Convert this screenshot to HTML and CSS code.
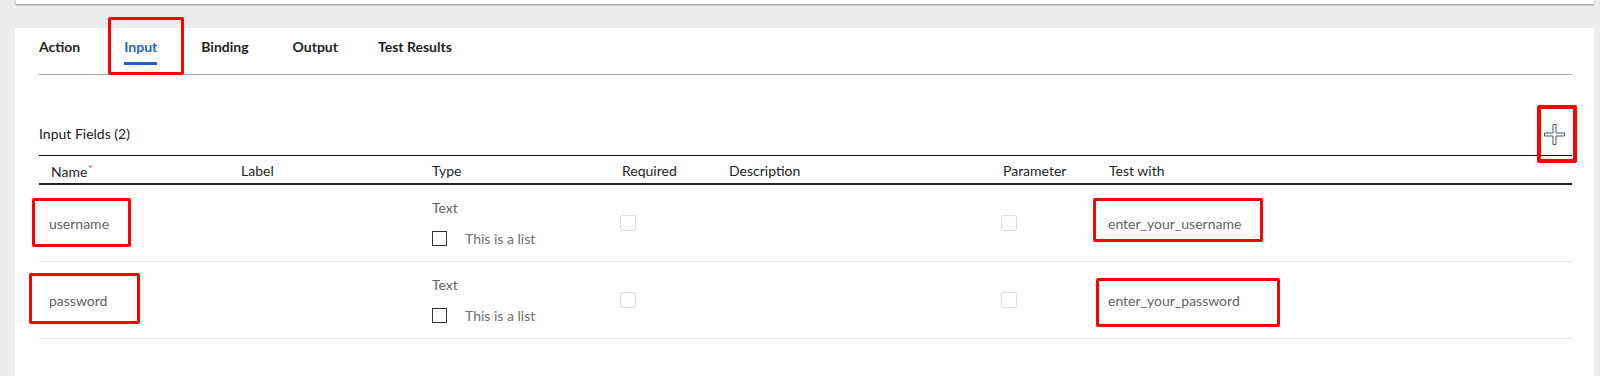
FILE: index.html
```html
<!DOCTYPE html>
<html lang="en">

<head>
  <meta charset="UTF-8" />
  <meta name="viewport" content="width=device-width, initial-scale=1" />
  <title>Input Fields</title>
  <link rel="stylesheet" href="styles.css">
</head>

<body>
  <div class="topbar"></div>

  <div class="panel">
    <nav class="tabs">
      <a class="tab">Action</a>
      <a class="tab active">Input</a>
      <a class="tab">Binding</a>
      <a class="tab">Output</a>
      <a class="tab">Test Results</a>
    </nav>

    <section class="fields">
      <div class="fields-head">
        <h2>Input Fields (2)</h2>
        <button class="add-btn" title="Add">
          <svg width="23" height="23" viewBox="0 0 23 23">
            <path d="M10 1.5 H13 V10 H21.5 V13 H13 V21.5 H10 V13 H1.5 V10 H10 Z" fill="#fff" stroke="#4b5363" stroke-width="1" />
          </svg>
        </button>
      </div>

      <div class="grid head">
        <div class="cell">Name<span class="req">*</span></div>
        <div class="cell">Label</div>
        <div class="cell">Type</div>
        <div class="cell">Required</div>
        <div class="cell">Description</div>
        <div class="cell">Parameter</div>
        <div class="cell">Test with</div>
      </div>

      <div class="grid row">
        <div class="cell name">username</div>
        <div class="cell"></div>
        <div class="cell type">
          <span>Text</span>
          <label class="list"><span class="box"></span>This is a list</label>
        </div>
        <div class="cell check"><span class="box light"></span></div>
        <div class="cell"></div>
        <div class="cell check"><span class="box light"></span></div>
        <div class="cell test">enter_your_username</div>
      </div>

      <div class="grid row">
        <div class="cell name">password</div>
        <div class="cell"></div>
        <div class="cell type">
          <span>Text</span>
          <label class="list"><span class="box"></span>This is a list</label>
        </div>
        <div class="cell check"><span class="box light"></span></div>
        <div class="cell"></div>
        <div class="cell check"><span class="box light"></span></div>
        <div class="cell test">enter_your_password</div>
      </div>
    </section>
  </div>

  <!-- red annotation boxes -->
  <div class="mark mark-tab"></div>
  <div class="mark mark-user"></div>
  <div class="mark mark-pass"></div>
  <div class="mark mark-test-user"></div>
  <div class="mark mark-test-pass"></div>
  <div class="mark mark-add"></div>
</body>

</html>
```

FILE: styles.css
```css
body {
  font-family: Lato, "Liberation Sans", sans-serif;
  font-size: 14px;
  margin: 0;
  background-color: #ececec;
  color: #222;
  position: relative;
  height: 376px;
  overflow: hidden;
}

.topbar {
  height: 4px;
  margin: 0 6px 0 16px;
  background-color: #fff;
  box-shadow: 0 1px 2px rgba(0, 0, 0, 0.45);
}

.panel {
  margin: 24px 6px 0 15px;
  padding: 0 22px 0 24px;
  background-color: #fff;
  height: 348px;
}

.tabs {
  display: flex;
  padding-bottom: 9px;
  border-bottom: 1px solid #a3a3a3;
}

.tab {
  padding: 9px 0 5px;
  margin-right: 44px;
  line-height: 20px;
  font-weight: 700;
  color: #1e1e1e;
  border-bottom: 3px solid transparent;
}

.tab:nth-child(4) {
  margin-right: 40px;
}

.tab.active {
  color: #1c63d9;
  border-bottom-color: #1c63d9;
}

.fields-head {
  display: flex;
  justify-content: space-between;
  align-items: center;
  height: 30px;
  margin: 44px 0 6px;
}

.fields-head h2 {
  margin: 0 0 2px;
  font-size: 14px;
  font-weight: 400;
  color: #222;
}

.add-btn {
  background: none;
  border: none;
  padding: 0;
  margin-right: 6px;
  width: 23px;
  height: 23px;
  cursor: pointer;
}

.add-btn svg {
  display: block;
}

.grid {
  display: grid;
  grid-template-columns: 190px 191px 190px 107px 274px 106px 1fr;
}

.head {
  border-top: 1px solid #111;
  border-bottom: 2px solid #222;
  height: 25px;
  padding-top: 2px;
  align-items: center;
}

.head .cell {
  padding-left: 12px;
  color: #1e1e1e;
}

.req {
  color: #e3262b;
  font-size: 10px;
  vertical-align: 5px;
  margin-left: 1px;
}

.row {
  height: 76px;
  border-bottom: 1px solid #e2e2e2;
  align-items: center;
  color: #626262;
}

.row .cell {
  padding-left: 11px;
}

.row .name {
  padding-left: 10px;
}

.type {
  display: flex;
  flex-direction: column;
  gap: 11px;
  line-height: 20px;
}

.row .type {
  padding-left: 12px;
}

.list {
  display: flex;
  align-items: center;
  color: #6e6e6e;
}

.box {
  display: inline-block;
  width: 13px;
  height: 13px;
  border: 1px solid #333;
  margin-right: 18px;
}

.box.light {
  width: 14px;
  height: 14px;
  border-color: #dcdcdc;
  border-radius: 2px;
  margin-right: 0;
  display: block;
}

.row .check {
  padding-left: 10px;
}

.mark {
  position: absolute;
  border: 3px solid #f00;
  border-radius: 2px;
}

.mark-tab {
  left: 108px;
  top: 17px;
  width: 70px;
  height: 52px;
}

.mark-user {
  left: 32px;
  top: 198px;
  width: 93px;
  height: 43px;
}

.mark-pass {
  left: 29px;
  top: 273px;
  width: 105px;
  height: 45px;
}

.mark-test-user {
  left: 1093px;
  top: 198px;
  width: 164px;
  height: 38px;
}

.mark-test-pass {
  left: 1096px;
  top: 278px;
  width: 178px;
  height: 43px;
}

.mark-add {
  left: 1537px;
  top: 105px;
  width: 32px;
  height: 50px;
  border-width: 4px;
}
```
